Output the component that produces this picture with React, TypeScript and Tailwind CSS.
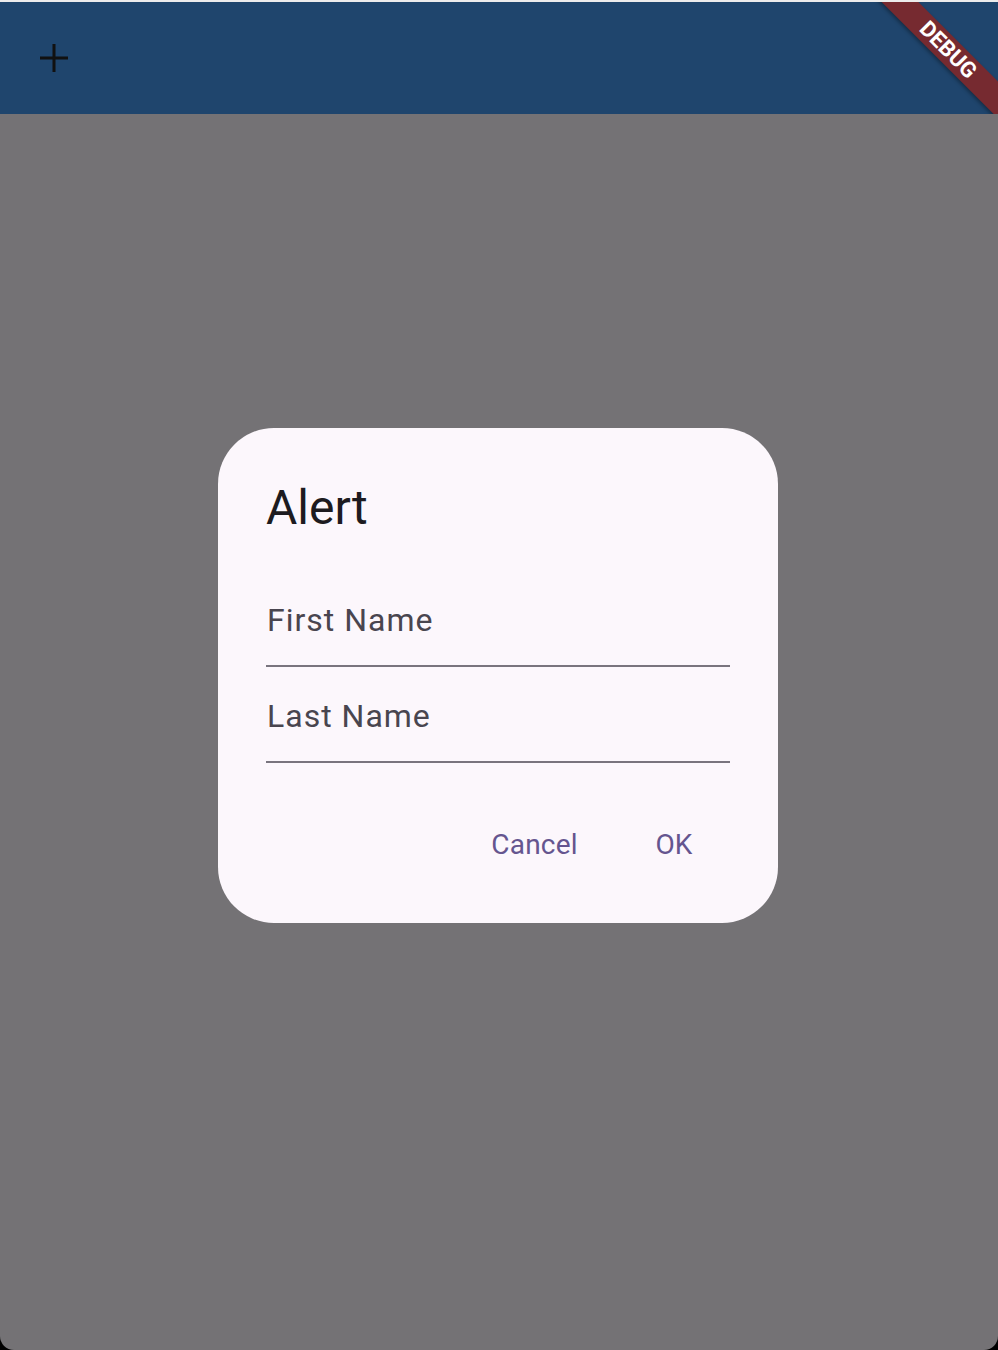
export default function App() {
  return (
    <div className="relative h-[1350px] w-full bg-black flex flex-col overflow-hidden font-['Roboto',sans-serif]">
      {/* window top edge */}
      <div className="h-[2px] bg-[#ececec]" />

      {/* screen under scrim */}
      <div className="flex-1 flex flex-col bg-[#747275] rounded-b-[14px] overflow-hidden">
        <div className="relative h-[112px] bg-[#1f456d] flex items-center pl-[40px] overflow-hidden">
          <svg width="28" height="28" viewBox="0 0 28 28">
            <path d="M14 0v28M0 14h28" stroke="#111111" strokeWidth="3" />
          </svg>

          {/* debug banner */}
          <div className="absolute right-[-40px] top-[35px] w-[180px] h-[26px] rotate-45 bg-[#762a30] shadow-[0_2px_4px_rgba(0,0,0,0.35)] flex items-center justify-center">
            <span className="text-white text-[22px] font-bold leading-none">DEBUG</span>
          </div>
        </div>
        <div className="flex-1" />
      </div>

      {/* dialog */}
      <div className="absolute inset-0 flex items-center justify-center pr-[2px]">
        <div className="w-[560px] bg-[#fcf7fc] rounded-[56px] pt-[48px] pb-[38px]">
          <div className="px-[48px]">
            <div className="text-[48px] leading-[64px] text-[#1d1b20]">Alert</div>
            <div className="mt-[31px]">
              <div className="h-[96px] pt-[25px] border-b-2 border-[#79747e]">
                <div className="text-[32px] leading-[48px] tracking-[1px] text-[#49454f] pl-[1px]">First Name</div>
              </div>
              <div className="h-[96px] pt-[25px] border-b-2 border-[#79747e]">
                <div className="text-[32px] leading-[48px] tracking-[1px] text-[#49454f] pl-[1px]">Last Name</div>
              </div>
            </div>
          </div>
          <div className="mt-[42px] flex justify-end pr-[40px] gap-[9px]">
            <button className="h-[80px] w-[133px] flex items-center justify-center text-[28px] tracking-[0.2px] text-[#65558f]">
              Cancel
            </button>
            <button className="h-[80px] w-[128px] flex items-center justify-center text-[28px] tracking-[0.2px] text-[#65558f]">
              OK
            </button>
          </div>
        </div>
      </div>
    </div>
  );
}
